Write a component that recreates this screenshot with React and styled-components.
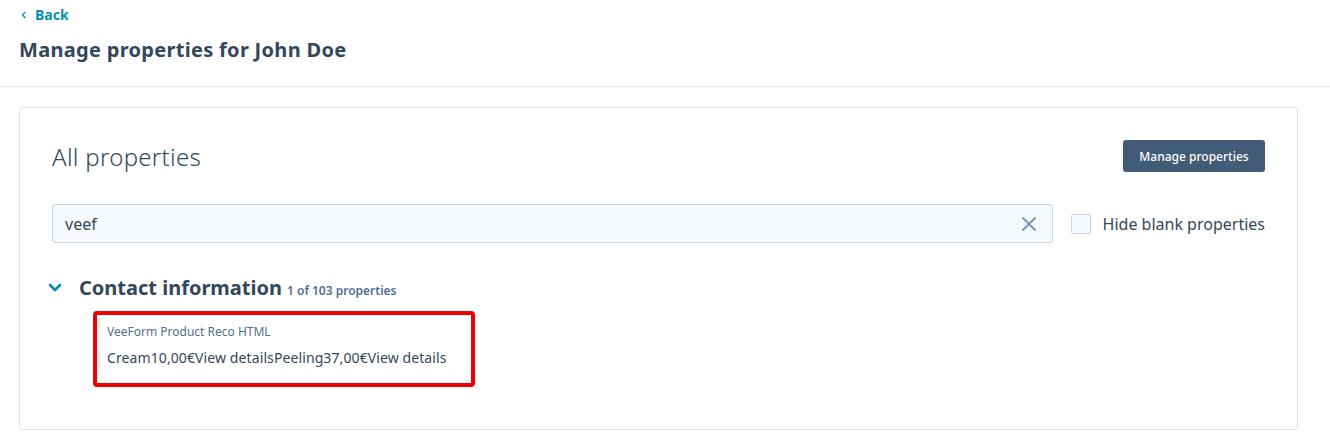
import React from 'react';
import styled, { createGlobalStyle } from 'styled-components';

const GlobalStyle = createGlobalStyle`
    body {
        margin: 0;
        background: #ffffff;
        font-family: "Noto Sans", "Open Sans", sans-serif;
        color: #33475b;
    }
`;

const Header = styled.header`
    padding: 2px 19px 0;
    height: 84px;
    border-bottom: 1px solid #dfe3eb;
    box-sizing: content-box;
`;

const BackLink = styled.a`
    display: inline-flex;
    align-items: center;
    gap: 8px;
    margin-left: 2px;
    color: #0091ae;
    font-size: 14px;
    font-weight: 700;
    text-decoration: none;
    line-height: 20px;
`;

const Title = styled.h1`
    margin: 11px 0 0;
    font-size: 20px;
    font-weight: 700;
    line-height: 28px;
    letter-spacing: 0.3px;
    color: #33475b;
`;

const Main = styled.main`
    padding: 20px 32px 0 19px;
`;

const Card = styled.section`
    border: 1px solid #dfe3eb;
    border-radius: 3px;
    padding: 32px 32px 44px;
    height: 323px;
    box-sizing: border-box;
`;

const CardHead = styled.div`
    display: flex;
    justify-content: space-between;
    align-items: center;
    height: 32px;
`;

const CardTitle = styled.h2`
    margin: 0;
    font-size: 24px;
    font-weight: 300;
    letter-spacing: 0.3px;
    color: #33475b;
`;

const Button = styled.button`
    background: #425b76;
    color: #fff;
    border: none;
    border-radius: 3px;
    height: 32px;
    width: 142px;
    font-family: inherit;
    font-size: 12px;
    font-weight: 500;
    cursor: pointer;
`;

const FilterRow = styled.div`
    display: flex;
    align-items: center;
    gap: 18px;
    margin-top: 32px;
`;

const SearchBox = styled.div`
    flex: 1;
    display: flex;
    align-items: center;
    height: 39px;
    background: #f5f8fa;
    border: 1px solid #cbd6e2;
    border-radius: 3px;
    padding: 0 16px 0 10px;
    box-sizing: border-box;
`;

const SearchInput = styled.input`
    flex: 1;
    border: none;
    background: transparent;
    font-family: inherit;
    font-size: 16px;
    color: #33475b;
    outline: none;
`;

const CheckLabel = styled.label`
    display: flex;
    align-items: center;
    gap: 12px;
    font-size: 16px;
    color: #33475b;
    white-space: nowrap;
`;

const Box = styled.span`
    width: 18px;
    height: 18px;
    border: 1px solid #cbd6e2;
    border-radius: 2px;
    background: #f5f8fa;
`;

const Section = styled.div`
    margin-top: 31px;
`;

const SectionHead = styled.div`
    display: flex;
    align-items: baseline;
    gap: 5px;
`;

const Chevron = styled.span`
    display: inline-flex;
    width: 26px;
    margin-left: -4px;
    align-self: center;
`;

const SectionTitle = styled.h3`
    margin: 0;
    font-size: 20px;
    font-weight: 700;
    color: #33475b;
`;

const Count = styled.span`
    font-size: 12px;
    font-weight: 600;
    color: #516f90;
`;

const Property = styled.div`
    display: inline-block;
    margin: 10px 0 0 41px;
    padding: 8px 24px 15px 10px;
    border: 4px solid #ee0000;
    border-radius: 4px;
`;

const PropLabel = styled.div`
    font-size: 12px;
    color: #516f90;
    line-height: 18px;
`;

const PropValue = styled.div`
    margin-top: 7px;
    font-size: 14px;
    letter-spacing: 0.1px;
    color: #33475b;
    line-height: 20px;
`;

export default function App() {
    return (
        <>
            <GlobalStyle />
            <Header>
                <BackLink href="#">
                    <svg width="6" height="8" viewBox="0 0 6 8">
                        <path d="M4.5 1 L1.5 4 L4.5 7" fill="none" stroke="#0091ae" strokeWidth="1.2" />
                    </svg>
                    Back
                </BackLink>
                <Title>Manage properties for John Doe</Title>
            </Header>
            <Main>
                <Card>
                    <CardHead>
                        <CardTitle>All properties</CardTitle>
                        <Button>Manage properties</Button>
                    </CardHead>
                    <FilterRow>
                        <SearchBox>
                            <SearchInput defaultValue="veef" />
                            <svg width="14" height="14" viewBox="0 0 14 14">
                                <path d="M1 1 L13 13 M13 1 L1 13" stroke="#7c98b6" strokeWidth="2" strokeLinecap="round" />
                            </svg>
                        </SearchBox>
                        <CheckLabel>
                            <Box />
                            Hide blank properties
                        </CheckLabel>
                    </FilterRow>
                    <Section>
                        <SectionHead>
                            <Chevron>
                                <svg width="14" height="9" viewBox="0 0 14 9">
                                    <path d="M2 2 L7 7 L12 2" fill="none" stroke="#0091ae" strokeWidth="2.6" strokeLinecap="round" strokeLinejoin="round" />
                                </svg>
                            </Chevron>
                            <SectionTitle>Contact information</SectionTitle>
                            <Count>1 of 103 properties</Count>
                        </SectionHead>
                        <Property>
                            <PropLabel>VeeForm Product Reco HTML</PropLabel>
                            <PropValue>Cream10,00€View detailsPeeling37,00€View details</PropValue>
                        </Property>
                    </Section>
                </Card>
            </Main>
        </>
    );
}
